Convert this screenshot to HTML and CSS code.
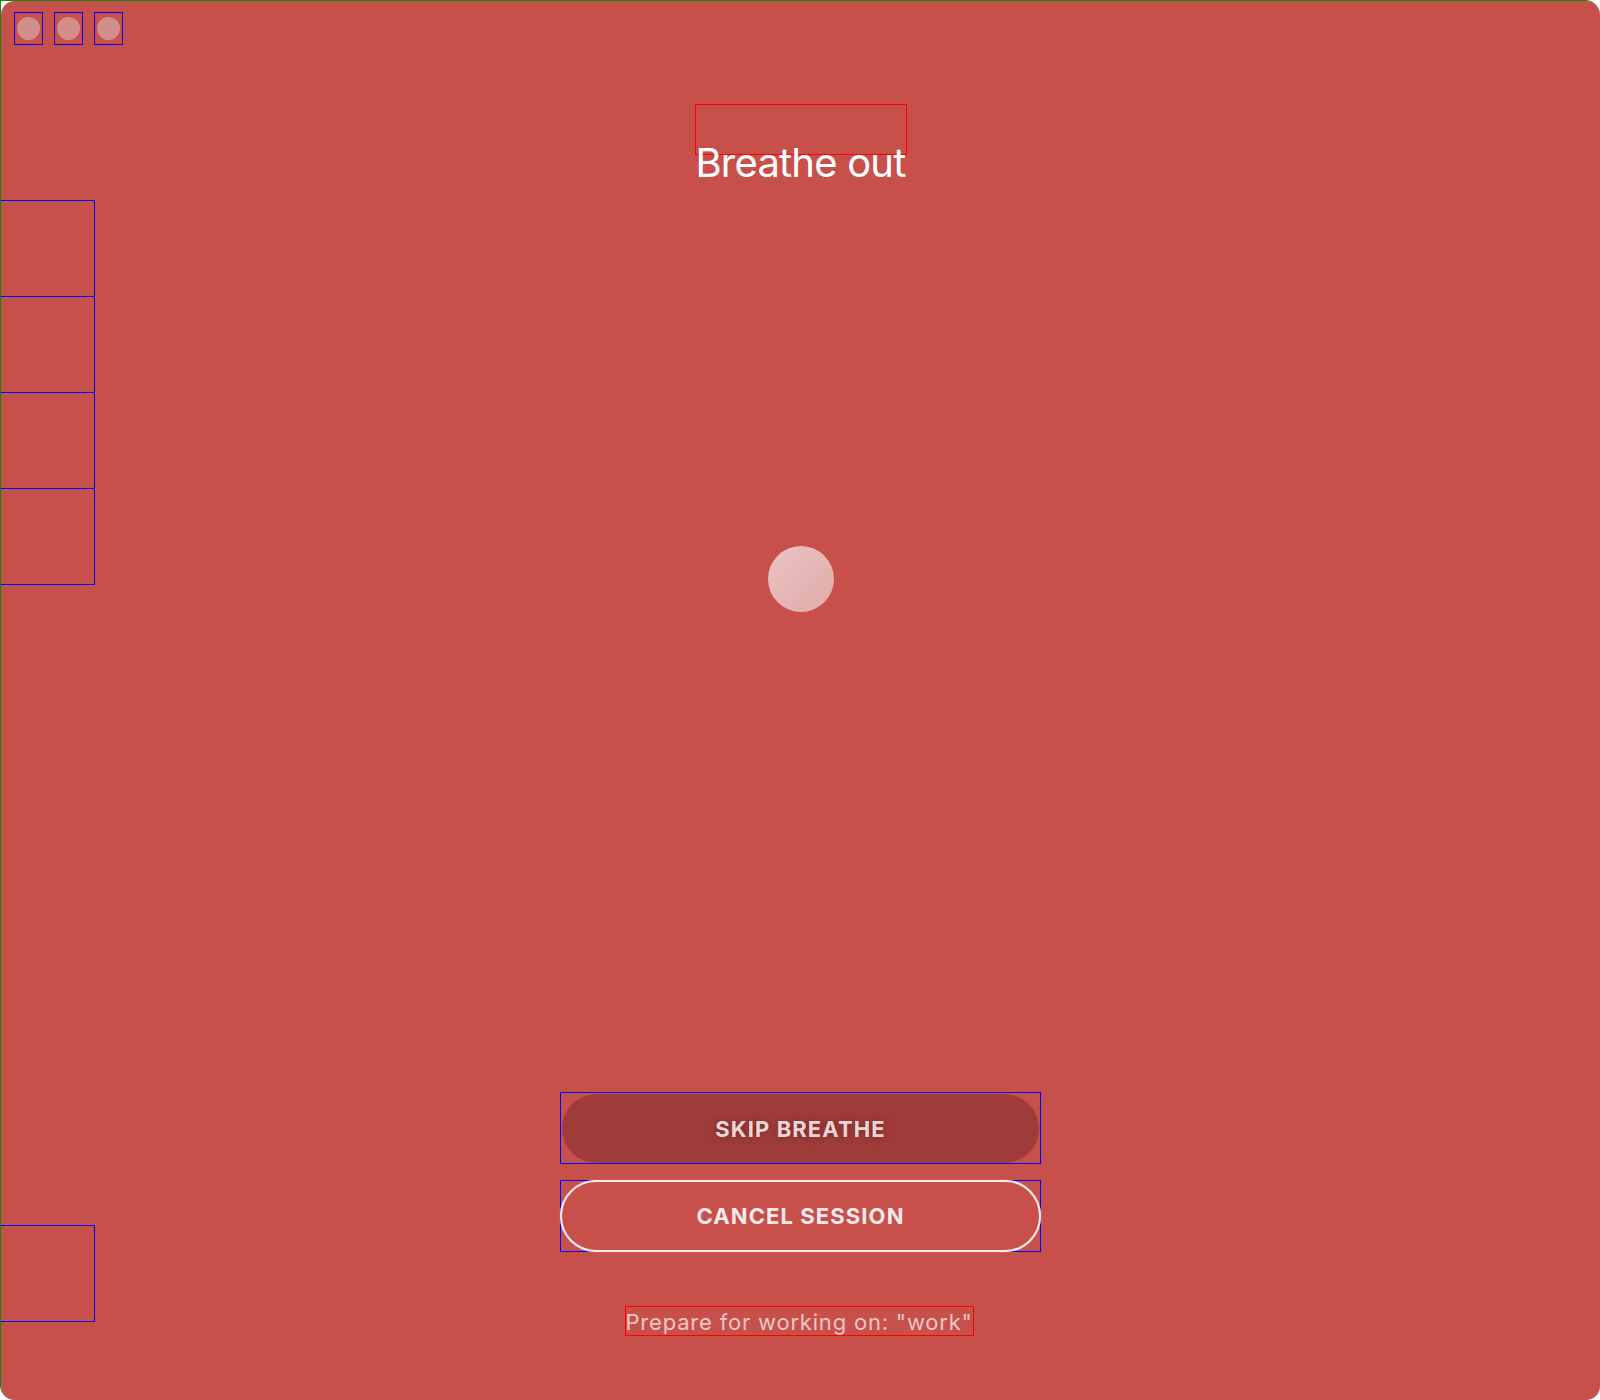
FILE: index.html
```html
<!DOCTYPE html>
<html lang="en">
<head>
<meta charset="utf-8">
<title>Breathe</title>
<link rel="stylesheet" href="styles.css">
</head>
<body>
<div class="frame">
  <div class="window">
    <div class="titlebar">
      <span class="light"><span class="dot"></span></span>
      <span class="light"><span class="dot"></span></span>
      <span class="light"><span class="dot"></span></span>
    </div>
    <div class="sidebar">
      <div class="side-group">
        <div class="slot"></div>
        <div class="slot"></div>
        <div class="slot"></div>
        <div class="slot"></div>
      </div>
      <div class="slot slot-bottom"></div>
    </div>
    <main class="content">
      <h1 class="phase">Breathe out</h1>
      <div class="orb"></div>
      <div class="actions">
        <div class="btn-box"><button class="btn btn-skip">SKIP BREATHE</button></div>
        <div class="btn-box"><button class="btn btn-cancel">CANCEL SESSION</button></div>
      </div>
      <p class="note">Prepare for working on: "work"</p>
    </main>
  </div>
</div>
</body>
</html>
```
FILE: styles.css
```css
html, body {
  margin: 0;
  padding: 0;
  background: #ffffff;
}
body {
  width: 1600px;
  height: 1400px;
  overflow: hidden;
  font-family: "Inter", "Liberation Sans", sans-serif;
}
.frame {
  width: 1599px;
  height: 1399px;
  border-top: 1px solid #0a8a0a;
  border-left: 1px solid #0a8a0a;
  border-top-right-radius: 15px;
  border-bottom-left-radius: 15px;
  background: #ffffff;
}
.window {
  position: relative;
  width: 1599px;
  height: 1399px;
  border-radius: 14px;
  background: #c8504b;
  overflow: hidden;
}
.titlebar {
  display: flex;
  gap: 11px;
  padding: 11px 0 0 13px;
  height: 33px;
}
.light {
  width: 27px;
  height: 31px;
  border: 1px solid #0000ff;
  display: flex;
  align-items: center;
  justify-content: center;
}
.dot {
  width: 23px;
  height: 23px;
  border-radius: 50%;
  background: #d38d8a;
}
.sidebar {
  position: absolute;
  left: -1px;
  top: 199px;
  width: 95px;
  height: 1122px;
  display: flex;
  flex-direction: column;
  justify-content: space-between;
}
.side-group {
  display: flex;
  flex-direction: column;
}
.slot {
  width: 93px;
  height: 95px;
  border: 1px solid #0000ff;
}
.slot + .slot {
  margin-top: -1px;
}
.content {
  display: flex;
  flex-direction: column;
  align-items: center;
}
.phase {
  margin: 59px 0 0 0;
  width: 210px;
  height: 49px;
  border: 1px solid #ff0000;
  font-size: 40px;
  font-weight: 400;
  line-height: 116px;
  color: #ffffff;
  text-align: center;
  white-space: nowrap;
  letter-spacing: -0.8px;
}
.orb {
  margin-top: 391px;
  width: 66px;
  height: 66px;
  border-radius: 50%;
  background: linear-gradient(135deg, #eac4c3 0%, #dfaaa9 100%);
}
.actions {
  margin-top: 480px;
  display: flex;
  flex-direction: column;
  gap: 16px;
}
.btn-box {
  width: 479px;
  height: 70px;
  border: 1px solid #0000ff;
  display: flex;
}
.btn {
  flex: 1;
  border-radius: 36px;
  font-family: "Inter", "Liberation Sans", sans-serif;
  font-weight: 700;
  font-size: 22px;
  letter-spacing: 1.1px;
  cursor: pointer;
}
.btn-skip {
  margin: 1px 1px 0 1px;
  border: none;
  background: #9f3c3a;
  color: #ead6d6;
  text-shadow: 0 0 6px rgba(90, 20, 20, 0.55);
}
.btn-cancel {
  margin: -1px;
  border: 2px solid #f8eaea;
  box-shadow: 0 0 1px 0 rgba(255, 240, 240, 0.8);
  background: #c8504b;
  color: #fbeaea;
}
.note {
  margin: 54px 3px 0 0;
  width: 347px;
  height: 28px;
  border: 1px solid #ff0000;
  font-size: 22px;
  line-height: 30px;
  letter-spacing: 0.8px;
  color: #efc6c5;
  text-align: center;
  white-space: nowrap;
}
```
